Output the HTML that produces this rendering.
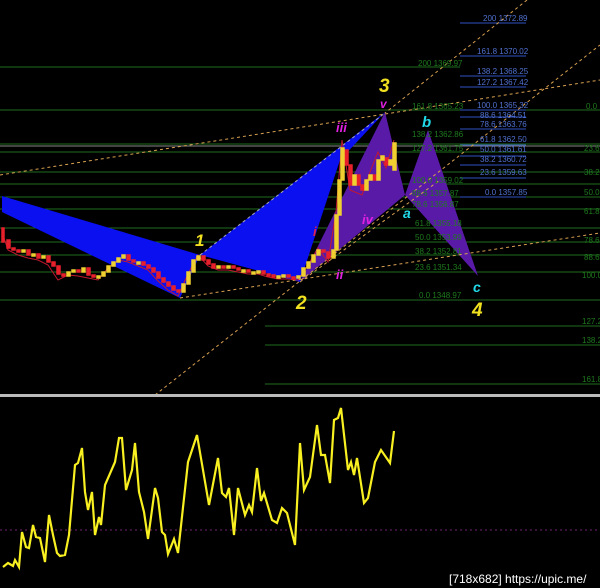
<!DOCTYPE html>
<html><head><meta charset="utf-8"><style>
html,body{margin:0;padding:0;background:#000;}
svg{display:block}
text{font-family:"Liberation Sans",sans-serif;}
</style></head><body>
<svg width="600" height="588" viewBox="0 0 600 588" xmlns="http://www.w3.org/2000/svg">
<rect width="600" height="588" fill="#000"/>
<g stroke="#1e6b1e" stroke-width="1">
<line x1="0" y1="67" x2="460" y2="67"/>
<line x1="0" y1="110" x2="600" y2="110"/>
<line x1="0" y1="144" x2="600" y2="144"/>
<line x1="0" y1="152" x2="600" y2="152"/>
<line x1="0" y1="172" x2="600" y2="172"/>
<line x1="0" y1="184" x2="600" y2="184"/>
<line x1="0" y1="197" x2="600" y2="197"/>
<line x1="0" y1="209" x2="600" y2="209"/>
<line x1="0" y1="228" x2="600" y2="228"/>
<line x1="0" y1="242" x2="600" y2="242"/>
<line x1="0" y1="255" x2="600" y2="255"/>
<line x1="0" y1="272" x2="600" y2="272"/>
<line x1="0" y1="300" x2="600" y2="300"/>
<line x1="265" y1="326" x2="600" y2="326"/>
<line x1="265" y1="345" x2="600" y2="345"/>
<line x1="265" y1="384" x2="600" y2="384"/>
</g>
<line x1="0" y1="146" x2="600" y2="146" stroke="#888" stroke-width="1"/>
<g stroke="#3050c0" stroke-width="1">
<line x1="460" y1="23" x2="526" y2="23"/>
<line x1="460" y1="56" x2="526" y2="56"/>
<line x1="460" y1="76" x2="526" y2="76"/>
<line x1="460" y1="87" x2="526" y2="87"/>
<line x1="460" y1="110" x2="526" y2="110"/>
<line x1="460" y1="117" x2="526" y2="117"/>
<line x1="460" y1="129" x2="526" y2="129"/>
<line x1="460" y1="145" x2="526" y2="145"/>
<line x1="460" y1="156" x2="526" y2="156"/>
<line x1="460" y1="165" x2="526" y2="165"/>
<line x1="460" y1="178" x2="526" y2="178"/>
<line x1="460" y1="197" x2="526" y2="197"/>
</g>
<polygon points="2,196 200,255 180,298 2,212" fill="#0a10f0"/>
<polygon points="200,255 385,112 340,160 300,282" fill="#0a10f0"/>
<polygon points="300,282 385,112 405,195" fill="#5a1aa8"/>
<polygon points="405,195 428,130 478,276" fill="#5a1aa8"/>
<g stroke="#d8a050" stroke-width="1" stroke-dasharray="3,3" fill="none">
<line x1="0" y1="175" x2="600" y2="80"/>
<line x1="180" y1="298" x2="600" y2="233"/>
<line x1="155" y1="395" x2="600" y2="45"/>
<line x1="527" y1="0" x2="385" y2="113"/>
<line x1="300" y1="282" x2="440" y2="180"/>
</g>
<line x1="200" y1="255" x2="385" y2="113" stroke="#aab" stroke-dasharray="3,3"/>
<polyline fill="none" stroke="#c01830" stroke-width="1" points="3,235 8,250 18,255 28,258 38,260 48,265 58,280 68,275 78,276 88,278 98,280 108,268 118,260 128,262 138,266 148,270 158,281 168,290 178,296 188,274 198,255 208,266 218,270 228,270 238,272 248,274 258,274 268,277 278,279 288,279 298,280 308,265 318,248 328,262 336,212 342,140 350,190 362,195 370,172 378,152 386,168 394,140"/>
<g fill="#e8202c" stroke="#e8202c" stroke-width="1.5">
<rect x="2" y="228" width="2" height="14"/>
<rect x="7" y="240" width="3" height="8"/><rect x="12" y="248" width="3" height="2"/><rect x="17" y="250" width="3" height="2"/>
<rect x="27" y="250" width="3" height="5"/><rect x="37" y="254" width="3" height="4"/><rect x="47" y="256" width="3" height="6"/>
<rect x="52" y="262" width="3" height="4"/><rect x="57" y="266" width="3" height="8"/><rect x="62" y="274" width="3" height="2"/>
<rect x="77" y="270" width="3" height="2"/><rect x="87" y="268" width="3" height="7"/><rect x="92" y="275" width="3" height="2"/>
<rect x="127" y="255" width="3" height="5"/><rect x="132" y="260" width="3" height="2"/><rect x="142" y="262" width="3" height="3"/>
<rect x="147" y="265" width="3" height="3"/><rect x="152" y="268" width="3" height="4"/><rect x="157" y="272" width="3" height="6"/>
<rect x="162" y="278" width="3" height="4"/><rect x="167" y="282" width="3" height="4"/><rect x="172" y="286" width="3" height="4"/>
<rect x="177" y="290" width="3" height="2"/><rect x="202" y="256" width="3" height="4"/><rect x="207" y="260" width="3" height="4"/>
<rect x="212" y="264" width="3" height="4"/><rect x="222" y="266" width="3" height="2"/><rect x="232" y="266" width="3" height="2"/>
<rect x="237" y="268" width="3" height="2"/><rect x="247" y="270" width="3" height="2"/><rect x="262" y="271" width="3" height="3"/>
<rect x="267" y="274" width="3" height="2"/><rect x="272" y="275" width="3" height="2"/><rect x="287" y="275" width="3" height="2"/>
<rect x="292" y="277" width="3" height="2"/><rect x="322" y="250" width="3" height="2"/><rect x="327" y="252" width="3" height="6"/>
<rect x="345" y="150" width="3" height="15"/><rect x="349" y="165" width="3" height="20"/><rect x="357" y="175" width="3" height="10"/>
<rect x="361" y="185" width="3" height="5"/><rect x="373" y="175" width="3" height="5"/><rect x="385" y="158" width="3" height="7"/>
</g>
<g fill="#f0d030" stroke="#f0d030" stroke-width="1.5">
<rect x="22" y="250" width="3" height="2"/><rect x="32" y="254" width="3" height="2"/><rect x="42" y="256" width="3" height="2"/>
<rect x="67" y="272" width="3" height="4"/><rect x="72" y="270" width="3" height="2"/><rect x="82" y="268" width="3" height="4"/>
<rect x="97" y="276" width="3" height="2"/><rect x="102" y="272" width="3" height="4"/><rect x="107" y="266" width="3" height="6"/>
<rect x="112" y="262" width="3" height="4"/><rect x="117" y="258" width="3" height="4"/><rect x="122" y="255" width="3" height="3"/>
<rect x="137" y="262" width="3" height="2"/><rect x="182" y="284" width="3" height="8"/><rect x="187" y="272" width="3" height="12"/>
<rect x="192" y="260" width="3" height="12"/><rect x="197" y="256" width="3" height="4"/><rect x="217" y="266" width="3" height="2"/>
<rect x="227" y="266" width="3" height="2"/><rect x="242" y="270" width="3" height="2"/><rect x="252" y="272" width="3" height="2"/>
<rect x="257" y="271" width="3" height="2"/><rect x="277" y="276" width="3" height="2"/><rect x="282" y="275" width="3" height="2"/>
<rect x="297" y="276" width="3" height="2"/><rect x="302" y="268" width="3" height="8"/><rect x="307" y="262" width="3" height="6"/>
<rect x="312" y="255" width="3" height="7"/><rect x="317" y="250" width="3" height="5"/><rect x="332" y="250" width="3" height="8"/>
<rect x="335" y="215" width="3" height="35"/><rect x="338" y="180" width="3" height="35"/><rect x="341" y="148" width="3" height="32"/>
<rect x="353" y="175" width="3" height="10"/><rect x="365" y="180" width="3" height="10"/><rect x="369" y="175" width="3" height="5"/>
<rect x="377" y="160" width="3" height="20"/><rect x="381" y="156" width="3" height="4"/><rect x="389" y="160" width="3" height="5"/>
<rect x="393" y="143" width="3" height="27"/>
</g>
<g fill="#1e7a1e" font-size="8">
<text x="418" y="66">200 1369.97</text>
<text x="412" y="109">161.8 1365.23</text>
<text x="412" y="137">138.2 1362.86</text>
<text x="412" y="151">127.2 1361.75</text>
<text x="412" y="183">100.0 1359.02</text>
<text x="412" y="196">88.6 1357.87</text>
<text x="412" y="207">78.6 1356.87</text>
<text x="415" y="226">61.8 1355.18</text>
<text x="415" y="240">50.0 1353.99</text>
<text x="415" y="254">38.2 1352.81</text>
<text x="415" y="270">23.6 1351.34</text>
<text x="419" y="298">0.0 1348.97</text>
<text x="586" y="109">0.0</text>
<text x="584" y="151">23.6</text>
<text x="584" y="175">38.2</text>
<text x="584" y="195">50.0</text>
<text x="584" y="214">61.8</text>
<text x="584" y="243">78.6</text>
<text x="584" y="260">88.6</text>
<text x="582" y="278">100.0</text>
<text x="582" y="324">127.2</text>
<text x="582" y="343">138.2</text>
<text x="582" y="382">161.8</text>
</g>
<g fill="#5070d0" font-size="8">
<text x="483" y="21">200 1372.89</text>
<text x="477" y="54">161.8 1370.02</text>
<text x="477" y="74">138.2 1368.25</text>
<text x="477" y="85">127.2 1367.42</text>
<text x="477" y="108">100.0 1365.32</text>
<text x="480" y="118">88.6 1364.51</text>
<text x="480" y="127">78.6 1363.76</text>
<text x="480" y="142">61.8 1362.50</text>
<text x="480" y="152">50.0 1361.61</text>
<text x="480" y="162">38.2 1360.72</text>
<text x="480" y="175">23.6 1359.63</text>
<text x="485" y="195">0.0 1357.85</text>
</g>
<g font-weight="bold" font-style="italic">
<text x="379" y="92" fill="#f0e020" font-size="19">3</text>
<text x="380" y="108" fill="#e020e0" font-size="12">v</text>
<text x="336" y="132" fill="#e020e0" font-size="13">iii</text>
<text x="422" y="127" fill="#20d8e8" font-size="15">b</text>
<text x="195" y="246" fill="#f0e020" font-size="17">1</text>
<text x="313" y="236" fill="#e02050" font-size="13">i</text>
<text x="336" y="279" fill="#e020e0" font-size="13">ii</text>
<text x="296" y="309" fill="#f0e020" font-size="19">2</text>
<text x="362" y="224" fill="#e020e0" font-size="13">iv</text>
<text x="403" y="218" fill="#20d8e8" font-size="14">a</text>
<text x="473" y="292" fill="#20d8e8" font-size="14">c</text>
<text x="472" y="316" fill="#f0e020" font-size="19">4</text>
</g>
<rect x="0" y="394" width="600" height="3" fill="#bbb"/>
<line x1="0" y1="530" x2="600" y2="530" stroke="#702070" stroke-dasharray="2,3"/>
<polyline fill="none" stroke="#f8f020" stroke-width="2.2" points="3,567 8,563 13,566 15,560 19,567 22,532 26,547 29,548 33,525 36,537 40,538 45,562 49,515 53,535 57,553 60,556 65,555 69,535 75,465 78,463 82,448 85,492 88,510 92,492 95,535 99,517 101,525 105,485 115,462 119,438 122,438 126,490 132,470 135,443 139,492 144,512 148,539 155,488 158,498 162,532 165,535 168,554 174,539 178,553 188,462 197,435 209,505 218,458 222,493 226,497 229,488 234,535 238,488 245,515 249,505 252,512 257,468 261,501 264,493 272,520 277,523 282,508 287,513 295,545 300,443 304,490 310,477 317,425 321,455 325,455 330,483 334,420 338,418 341,408 348,470 351,462 354,475 357,458 364,503 368,498 375,462 381,450 390,463 394,431"/>
<text x="449" y="583" fill="#fff" font-size="12">[718x682] https://upic.me/</text>
</svg>
</body></html>
